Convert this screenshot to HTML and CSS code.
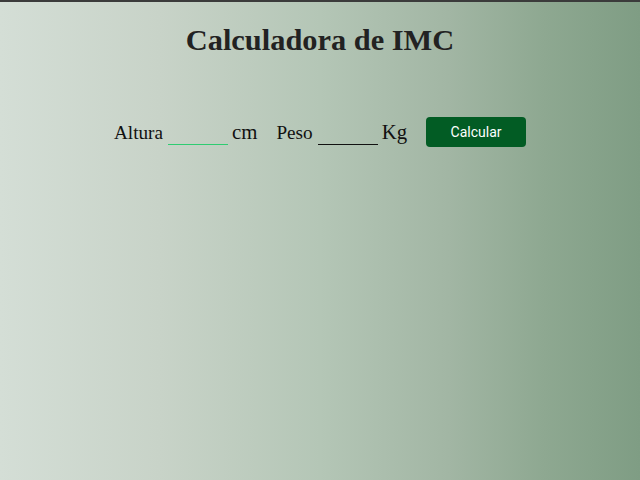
FILE: index.html
```html
<!DOCTYPE html>
<html lang="pt">
<head>
<meta charset="utf-8">
<title>Calculadora de IMC</title>
<link rel="stylesheet" href="styles.css">
</head>
<body>
<div class="topbar"></div>
<main class="page">
  <h1 class="title">Calculadora de IMC</h1>
  <form class="row">
    <label class="field">
      <span class="label">Altura</span>
      <input class="input input-active" type="text">
      <span class="unit">cm</span>
    </label>
    <label class="field">
      <span class="label">Peso</span>
      <input class="input" type="text">
      <span class="unit">Kg</span>
    </label>
    <button class="button" type="button">Calcular</button>
  </form>
</main>
</body>
</html>
```

FILE: styles.css
```css
html, body {
  margin: 0;
  padding: 0;
  height: 100%;
}

body {
  background: linear-gradient(to right, #d4ded6 0%, #c8d3c8 25%, #b4c6b6 50%, #a2b6a4 70%, #8ea891 85%, #7f9d84 100%);
  font-family: "Liberation Serif", "Times New Roman", serif;
  color: #111;
}

.topbar {
  height: 2px;
  background: #3b3b3b;
}

.page {
  display: flex;
  flex-direction: column;
  align-items: center;
}

.title {
  margin: 21px 0 0;
  font-size: 30.4px;
  line-height: 35px;
  font-weight: bold;
  color: #222;
}

.row {
  margin-top: 59px;
  display: flex;
  align-items: center;
  justify-content: center;
  gap: 19px;
}

.field {
  display: flex;
  align-items: baseline;
  gap: 4px;
}

.label {
  font-size: 19.2px;
  margin-right: 1px;
}

.unit {
  font-size: 20.8px;
}

.input {
  width: 60px;
  padding: 0;
  border: none;
  border-bottom: 1px solid #111;
  background: transparent;
  font-family: "Liberation Serif", serif;
  font-size: 19px;
  outline: none;
}

.input-active {
  border-bottom-color: #2ecc71;
}

.button {
  width: 100px;
  height: 30px;
  border: none;
  border-radius: 4px;
  background: #025c24;
  color: #fff;
  font-family: "Roboto", "Liberation Sans", sans-serif;
  font-size: 14px;
}
```
